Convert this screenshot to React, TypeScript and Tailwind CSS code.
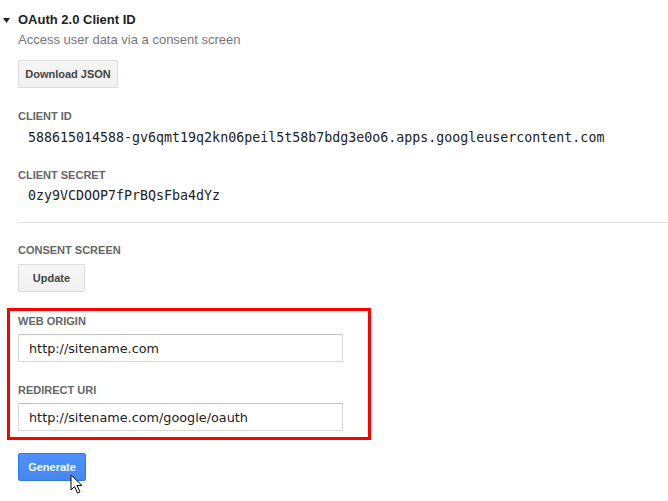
import React from 'react';

const Label: React.FC<{ children: React.ReactNode; className?: string }> = ({ children, className = '' }) => (
  <div className={`text-[11px] leading-[14px] font-bold uppercase text-[#666] ${className}`}>{children}</div>
);

const GrayButton: React.FC<{ children: React.ReactNode; className?: string }> = ({ children, className = '' }) => (
  <button className={`flex items-center justify-center whitespace-nowrap h-[28px] rounded-[2px] border border-[#dcdcdc] bg-gradient-to-b from-[#f5f5f5] to-[#f1f1f1] text-[11px] font-bold text-[#444] ${className}`}>
    {children}
  </button>
);

const Field: React.FC<{ value: string }> = ({ value }) => (
  <input
    readOnly
    value={value}
    className="mt-[6px] block w-[325px] h-[28px] px-[10px] border border-[#d9d9d9] border-t-[#c0c0c0] bg-white text-[12.8px] text-[#222] outline-none"
    style={{ fontFamily: '"DejaVu Sans", sans-serif' }}
  />
);

export default function App() {
  return (
    <div className="relative w-[668px] h-[501px] bg-white overflow-hidden" style={{ fontFamily: '"Liberation Sans", Arial, sans-serif' }}>
      <div className="pt-[11px]">
        <div className="flex items-center h-[18px]">
          <span className="w-[18px] flex justify-center">
            <svg width="7" height="5" viewBox="0 0 7 5" className="-ml-[6px]">
              <path d="M0 0h7L3.5 5z" fill="#222" />
            </svg>
          </span>
          <span className="text-[13px] font-bold text-[#222]">OAuth 2.0 Client ID</span>
        </div>

        <div className="pl-[18px]">
          <div className="mt-[2px] text-[13px] leading-[18px] text-[#777]">Access user data via a consent screen</div>
          <GrayButton className="mt-[11px] w-[100px]">Download JSON</GrayButton>

          <Label className="mt-[21px]">Client ID</Label>
          <div className="mt-[6px] pl-[10px] text-[13.3px] leading-[18px] text-[#222] whitespace-nowrap" style={{ fontFamily: '"DejaVu Sans Mono", monospace' }}>
            588615014588-gv6qmt19q2kn06peil5t58b7bdg3e0o6.apps.googleusercontent.com
          </div>

          <Label className="mt-[21px]">Client Secret</Label>
          <div className="mt-[5px] pl-[10px] text-[13.3px] leading-[18px] text-[#222]" style={{ fontFamily: '"DejaVu Sans Mono", monospace' }}>
            0zy9VCDOOP7fPrBQsFba4dYz
          </div>

          <div className="mt-[17px] border-t border-[#e5e5e5]" />

          <Label className="mt-[20px]">Consent screen</Label>
          <GrayButton className="mt-[7px] w-[67px]">Update</GrayButton>
        </div>

        <div className="mt-[16px] ml-[7px] w-[364px] border-[3px] border-[#ff0000] pl-[8px] pt-[3px] pb-[6px]">
          <Label>Web origin</Label>
          <Field value="http://sitename.com" />
          <Label className="mt-[21px]">Redirect URI</Label>
          <Field value="http://sitename.com/google/oauth" />
        </div>

        <div className="pl-[18px]">
          <button className="mt-[13px] h-[28px] w-[68px] rounded-[2px] border border-[#3079ed] bg-gradient-to-b from-[#4d90fe] to-[#4787ed] text-[11px] font-bold text-white">
            Generate
          </button>
        </div>
      </div>

      <svg className="absolute left-[70px] top-[474px]" width="14" height="21" viewBox="0 0 14 21">
        <path d="M1 1v15l3.5-3.5 3 6.5 2.5-1.2-3-6.3H12z" fill="#fff" stroke="#000" strokeWidth="1" strokeLinejoin="round" />
      </svg>
    </div>
  );
}
